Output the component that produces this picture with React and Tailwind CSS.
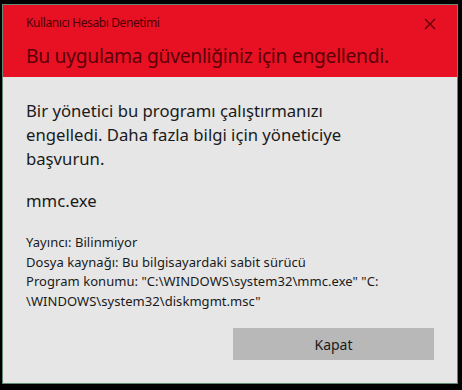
export default function App() {
  return (
    <div className="w-[462px] h-[390px] bg-black relative overflow-hidden" style={{ fontFamily: '"Noto Sans", "Open Sans", sans-serif' }}>
      <div className="ml-[2px] mt-[4px] w-[456px] h-[380px] border border-[#5f8a74] bg-[#e6e6e6] flex flex-col">
        <div className="h-[72px] bg-[#e81123] px-[23px] pt-[10px] relative">
          <div className="text-[12px] leading-[16px] text-[#4d0005] tracking-[-0.4px]">Kullanıcı Hesabı Denetimi</div>
          <div className="mt-[12px] text-[19.3px] leading-[26px] text-[#5a0008] tracking-[-0.3px]">Bu uygulama güvenliğiniz için engellendi.</div>
          <svg className="absolute right-[21px] top-[13px]" width="12" height="12" viewBox="0 0 12 12">
            <path d="M1 1 L11 11 M11 1 L1 11" stroke="#5a0008" strokeWidth="1.2" />
          </svg>
        </div>
        <div className="px-[23px] pt-[22px] text-[#1a1a1a]">
          <div className="text-[16.7px] leading-[24px] w-[360px]">
            Bir yönetici bu programı çalıştırmanızı<br />engelledi. Daha fazla bilgi için yöneticiye<br />başvurun.
          </div>
          <div className="mt-[18px] text-[16.7px] leading-[24px]">mmc.exe</div>
          <div className="mt-[20px] text-[13px] leading-[19.5px] tracking-[0.05px]">
            <div>Yayıncı: Bilinmiyor</div>
            <div>Dosya kaynağı: Bu bilgisayardaki sabit sürücü</div>
            <div>Program konumu: "C:\WINDOWS\system32\mmc.exe" "C:<br />\WINDOWS\system32\diskmgmt.msc"</div>
          </div>
        </div>
        <div className="flex justify-end pr-[23px] mt-auto mb-[23px]">
          <div className="w-[201px] h-[32px] bg-[#b8b8b8] flex items-center justify-center text-[14px] text-[#1a1a1a]">Kapat</div>
        </div>
      </div>
    </div>
  );
}
